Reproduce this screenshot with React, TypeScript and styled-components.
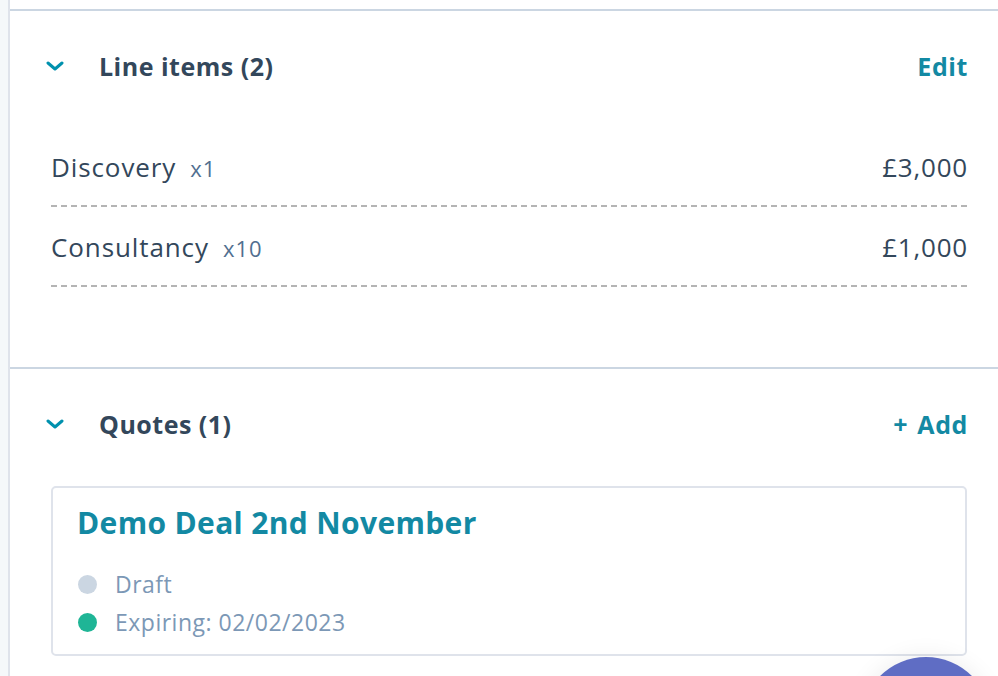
import React from "react";
import styled, { createGlobalStyle } from "styled-components";

const Global = createGlobalStyle`
  html, body { margin: 0; padding: 0; background: #ffffff; }
  body { font-family: "Open Sans", "Noto Sans", sans-serif; color: #33475b; overflow: hidden; }
  * { box-sizing: border-box; }
`;

const Page = styled.div`
  display: flex;
  width: 998px;
  height: 676px;
  overflow: hidden;
  position: relative;
`;

const Gutter = styled.div`
  width: 8px;
  flex: none;
  background: #f5f8fa;
  border-right: 2px solid #dfe3eb;
  box-sizing: content-box;
`;

const Main = styled.div`
  flex: 1;
  display: flex;
  flex-direction: column;
  padding-top: 9px;
`;

const Section = styled.section<{ $pb?: number }>`
  border-top: 2px solid #cbd6e2;
  padding: 0 31px ${(p) => p.$pb ?? 0}px 35px;
`;

const Header = styled.div`
  height: 110px;
  display: flex;
  align-items: center;
`;

const Chevron = styled.svg`
  width: 18px;
  height: 10px;
  flex: none;
  margin-left: 1px;
`;

const Title = styled.h2`
  margin: 0 0 0 35px;
  font-size: 25px;
  font-weight: 700;
  letter-spacing: 0.5px;
  color: #33475b;
  flex: 1;
`;

const Action = styled.a`
  font-size: 25px;
  font-weight: 700;
  letter-spacing: 0.6px;
  word-spacing: 2px;
  margin-right: -1px;
  color: #1389a3;
  text-decoration: none;
`;

const Rows = styled.div`
  margin: 6px 0 0 6px;
`;

const Row = styled.div`
  height: 80px;
  display: flex;
  align-items: center;
  justify-content: space-between;
  position: relative;
  &::after {
    content: "";
    position: absolute;
    left: 0;
    right: 0;
    bottom: 0;
    height: 2px;
    background: repeating-linear-gradient(to right, #b4b4b4 0 6px, transparent 6px 10px);
  }
`;

const ItemName = styled.span`
  font-size: 26px;
  letter-spacing: 0.9px;
  color: #33475b;
`;

const Qty = styled.span`
  font-size: 22px;
  letter-spacing: 1px;
  color: #516f90;
  margin-left: 14px;
`;

const Amount = styled.span`
  font-size: 26px;
  letter-spacing: 0.8px;
  margin-right: -1px;
  color: #33475b;
`;

const Card = styled.div`
  margin: 7px 0 0 6px;
  height: 170px;
  border: 2px solid #dfe3eb;
  border-radius: 5px;
  padding: 15px 24px 0 24px;
`;

const CardTitle = styled.a`
  display: block;
  font-size: 30px;
  font-weight: 700;
  letter-spacing: 0.35px;
  color: #1389a3;
  text-decoration: none;
  line-height: 40px;
`;

const StatusList = styled.div`
  margin-top: 26px;
  display: flex;
  flex-direction: column;
  gap: 8px;
`;

const Status = styled.div`
  display: flex;
  align-items: center;
  height: 30px;
  font-size: 23px;
  letter-spacing: 0.5px;
  color: #7c98b6;
`;

const Dot = styled.span<{ $color: string }>`
  width: 19px;
  height: 19px;
  border-radius: 50%;
  background: ${(p) => p.$color};
  margin: 0 18px 0 1px;
  flex: none;
`;

const Launcher = styled.div`
  position: absolute;
  left: 861px;
  top: 657px;
  width: 130px;
  height: 130px;
  border-radius: 50%;
  background: #5f6dc4;
  box-shadow: 0 0 24px rgba(0, 0, 0, 0.08);
`;

const ChevronIcon = () => (
  <Chevron viewBox="0 0 18 10">
    <path d="M2 2 L9 8 L16 2" fill="none" stroke="#0091ae" strokeWidth="3" strokeLinecap="round" strokeLinejoin="round" />
  </Chevron>
);

export default function App() {
  return (
    <Page>
      <Global />
      <Gutter />
      <Main>
        <Section $pb={80}>
          <Header>
            <ChevronIcon />
            <Title>Line items (2)</Title>
            <Action href="#">Edit</Action>
          </Header>
          <Rows>
            <Row>
              <span>
                <ItemName>Discovery</ItemName>
                <Qty>x1</Qty>
              </span>
              <Amount>£3,000</Amount>
            </Row>
            <Row>
              <span>
                <ItemName>Consultancy</ItemName>
                <Qty>x10</Qty>
              </span>
              <Amount>£1,000</Amount>
            </Row>
          </Rows>
        </Section>
        <Section>
          <Header>
            <ChevronIcon />
            <Title>Quotes (1)</Title>
            <Action href="#">+ Add</Action>
          </Header>
          <Card>
            <CardTitle href="#">Demo Deal 2nd November</CardTitle>
            <StatusList>
              <Status>
                <Dot $color="#cbd6e2" />
                Draft
              </Status>
              <Status>
                <Dot $color="#1fb596" />
                Expiring: 02/02/2023
              </Status>
            </StatusList>
          </Card>
        </Section>
      </Main>
      <Launcher />
    </Page>
  );
}
